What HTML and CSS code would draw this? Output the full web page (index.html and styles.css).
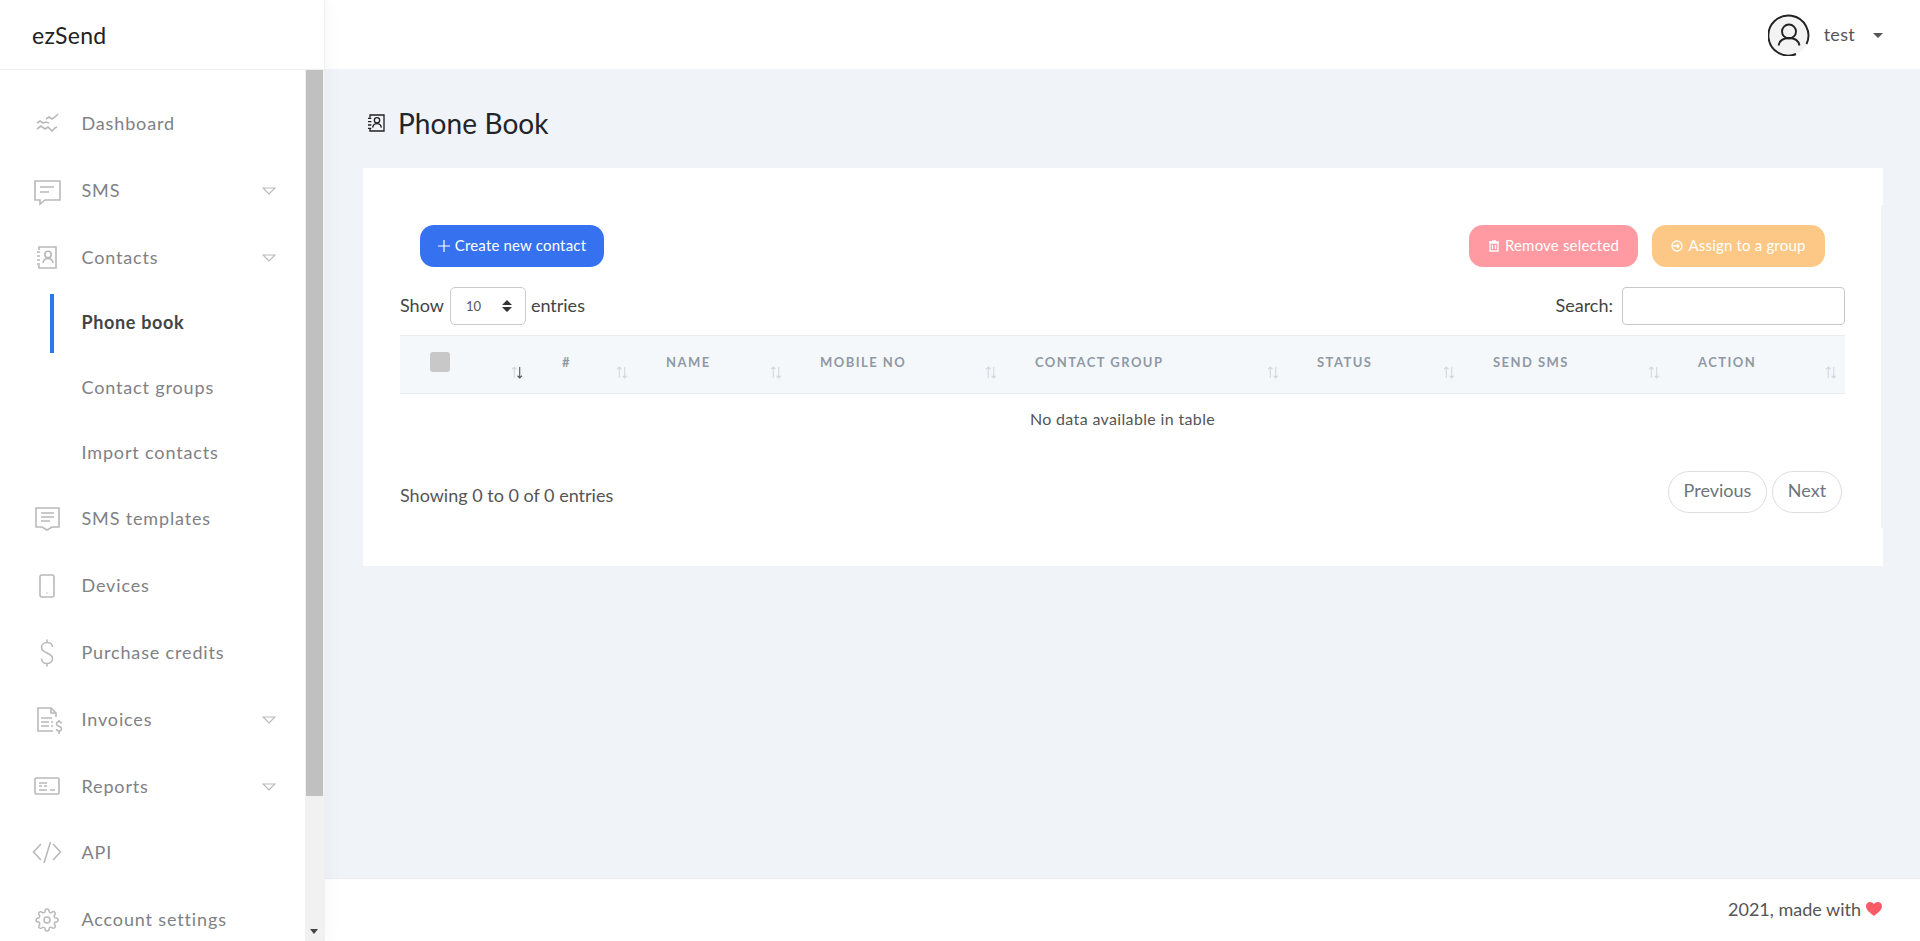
FILE: index.html
```html
<!DOCTYPE html>
<html lang="en">
<head>
<meta charset="utf-8">
<title>ezSend - Phone Book</title>
<link rel="stylesheet" href="styles.css">
</head>
<body>
<div class="app">
  <aside class="sidebar">
    <div class="brand">ezSend</div>
    <div class="side-body">
      <nav class="nav">
        <a class="item"><svg class="ico" viewBox="0 0 30 30"><path d="M14 10l3-2 3 2 3-2 3-3M5 14l3-2 3 2 3-1 3 1M5 20l4-3 4 3 3-2 4 4 3-3 2-1"/></svg><span>Dashboard</span></a>
        <a class="item"><svg class="ico" viewBox="0 0 30 30"><path d="M3 5h25v19H13l-5 4v-4H3z"/><path d="M8 11h14M8 16h9"/></svg><span>SMS</span><svg class="chev" viewBox="0 0 14 8"><path d="M1 1h12L7 7z"/></svg></a>
        <a class="item"><svg class="ico" viewBox="0 0 30 30"><path d="M7 7V4h17v21H7v-3"/><path d="M5 9h3M5 13h3M5 17h3M5 21h3"/><circle cx="16" cy="11.500" r="3.200"/><path d="M11 20c.400-3 2-4.500 5-4.500s4.600 1.500 5 4.500"/></svg><span>Contacts</span><svg class="chev" viewBox="0 0 14 8"><path d="M1 1h12L7 7z"/></svg></a>
        <div class="sub">
          <a class="sub-item active">Phone book</a>
          <a class="sub-item">Contact groups</a>
          <a class="sub-item">Import contacts</a>
        </div>
        <a class="item"><svg class="ico" viewBox="0 0 30 30"><path d="M4 4h23v19h-7l-5 3-5-3H4z"/><path d="M9 9h13M9 13h13M9 17h9"/></svg><span>SMS templates</span></a>
        <a class="item"><svg class="ico" viewBox="0 0 30 30"><rect x="8" y="4" width="14" height="22" rx="2"/><path d="M14.500 22h1"/></svg><span>Devices</span></a>
        <a class="item"><svg class="ico" viewBox="0 0 30 30"><path d="M20.500 9c0-3-2.500-4.500-5.500-4.500S9.500 6.500 9.500 9.500c0 3 2.500 4.200 5.500 5.500s5.500 2.500 5.500 5.500-2.500 5-5.500 5-5.500-2-5.500-5M15 1.500v3M15 25.500v3"/></svg><span>Purchase credits</span></a>
        <a class="item"><svg class="ico" viewBox="0 0 30 30"><path d="M24 12V8l-5-5H6v23h15"/><path d="M19 3v5h5M9 13h11M9 17h8M9 21h8M19 17h2M19 21h2"/><path d="M29.500 18.500c0-1-1-1.800-2.500-1.800s-2.500.8-2.500 2.200 1.400 2 2.500 2.400 2.500 1 2.500 2.400-1 2.300-2.500 2.300-2.500-.9-2.500-2M27 15v1.700M27 26.500V29"/></svg><span>Invoices</span><svg class="chev" viewBox="0 0 14 8"><path d="M1 1h12L7 7z"/></svg></a>
        <a class="item"><svg class="ico" viewBox="0 0 30 30"><rect x="3" y="6" width="24" height="16" rx="1"/><path d="M7 11h8M7 14h3M12 14h3M7 18h8M18 18h5"/></svg><span>Reports</span><svg class="chev" viewBox="0 0 14 8"><path d="M1 1h12L7 7z"/></svg></a>
        <a class="item"><svg class="ico" viewBox="0 0 30 30"><path d="M9 6l-7.500 8L9 22M21 6l7.500 8L21 22M18.500 4L12 25"/></svg><span>API</span></a>
        <a class="item"><svg class="ico gear" viewBox="0 0 24 24"><circle cx="12" cy="12" r="3"/><path d="M19.400 15a1.650 1.650 0 0 0 .330 1.820l.060.060a2 2 0 0 1 0 2.830 2 2 0 0 1-2.830 0l-.060-.060a1.650 1.650 0 0 0-1.820-.330 1.650 1.650 0 0 0-1 1.510V21a2 2 0 0 1-2 2 2 2 0 0 1-2-2v-.090A1.650 1.650 0 0 0 9 19.400a1.650 1.650 0 0 0-1.820.330l-.060.060a2 2 0 0 1-2.830 0 2 2 0 0 1 0-2.830l.060-.060a1.650 1.650 0 0 0 .330-1.820 1.650 1.650 0 0 0-1.510-1H3a2 2 0 0 1-2-2 2 2 0 0 1 2-2h.090A1.650 1.650 0 0 0 4.600 9a1.650 1.650 0 0 0-.330-1.820l-.060-.060a2 2 0 0 1 0-2.830 2 2 0 0 1 2.830 0l.060.060a1.650 1.650 0 0 0 1.820.330H9a1.650 1.650 0 0 0 1-1.510V3a2 2 0 0 1 2-2 2 2 0 0 1 2 2v.090a1.650 1.650 0 0 0 1 1.510 1.650 1.650 0 0 0 1.820-.330l.060-.060a2 2 0 0 1 2.830 0 2 2 0 0 1 0 2.830l-.060.060a1.650 1.650 0 0 0-.330 1.820V9a1.650 1.650 0 0 0 1.510 1H21a2 2 0 0 1 2 2 2 2 0 0 1-2 2h-.090a1.650 1.650 0 0 0-1.510 1z"/></svg><span>Account settings</span></a>
      </nav>
      <div class="scrollbar"><div class="thumb"></div><div class="arrow"></div></div>
    </div>
  </aside>
  <div class="main">
    <header class="top">
      <svg class="avatar" viewBox="0 0 42 42"><circle class="av-bg" cx="21" cy="21" r="20"/><path class="av-line" d="M38.500 30A20 20 0 1 0 28 40"/><circle class="av-line" cx="21" cy="17.500" r="7"/><path class="av-line" d="M10.500 31.500c1-5 4.500-7.500 10.500-7.500s9.500 2.500 10.500 7.500"/></svg>
      <span class="user">test</span>
      <span class="caret"></span>
    </header>
    <main class="content">
      <h1 class="title"><svg class="title-ico" viewBox="0 0 30 30"><path d="M6 7V3h21v24H6v-4"/><path d="M3 8h5M3 13h5M3 18h5M3 23h5"/><circle cx="16.500" cy="11" r="4"/><path d="M10 22c.500-4 3-6 6.500-6s6 2 6.500 6"/></svg>Phone Book</h1>
      <section class="card">
        <div class="actions">
          <button class="btn primary"><svg class="plus" viewBox="0 0 12 12"><path d="M6 0v12M0 6h12"/></svg><span class="btn-text">Create new contact</span></button>
          <div class="actions-right">
            <button class="btn danger"><svg class="mini" viewBox="0 0 12 12"><path d="M2 3h8v8H2zM1 2h10M4 1h4M4.500 5v4M7.500 5v4"/></svg><span class="btn-text">Remove selected</span></button>
            <button class="btn warning"><svg class="mini" viewBox="0 0 12 12"><circle cx="6" cy="6" r="5"/><path d="M2 6h6M6 4l2 2-2 2"/></svg><span class="btn-text">Assign to a group</span></button>
          </div>
        </div>
        <div class="controls">
          <label class="length"><span class="lbl">Show</span><span class="select">10<svg class="updown" viewBox="0 0 10 12"><path d="M5 0l5 5H0zM5 12l5-5H0z"/></svg></span><span class="lbl">entries</span></label>
          <label class="search"><span class="lbl">Search:</span><input class="search-input" type="text"></label>
        </div>
        <table class="table">
          <thead>
            <tr>
              <th class="c1"><span class="check"></span><svg class="sort first" viewBox="0 0 11 12"><path d="M3 11V1M1 3l2-2 2 2"/><path class="down" d="M8 1v10M6 9l2 2 2-2"/></svg></th>
              <th class="c2">#<svg class="sort" viewBox="0 0 11 12"><path d="M3 11V1M1 3l2-2 2 2M8 1v10M6 9l2 2 2-2"/></svg></th>
              <th class="c3">NAME<svg class="sort" viewBox="0 0 11 12"><path d="M3 11V1M1 3l2-2 2 2M8 1v10M6 9l2 2 2-2"/></svg></th>
              <th class="c4">MOBILE NO<svg class="sort" viewBox="0 0 11 12"><path d="M3 11V1M1 3l2-2 2 2M8 1v10M6 9l2 2 2-2"/></svg></th>
              <th class="c5">CONTACT GROUP<svg class="sort" viewBox="0 0 11 12"><path d="M3 11V1M1 3l2-2 2 2M8 1v10M6 9l2 2 2-2"/></svg></th>
              <th class="c6">STATUS<svg class="sort" viewBox="0 0 11 12"><path d="M3 11V1M1 3l2-2 2 2M8 1v10M6 9l2 2 2-2"/></svg></th>
              <th class="c7">SEND SMS<svg class="sort" viewBox="0 0 11 12"><path d="M3 11V1M1 3l2-2 2 2M8 1v10M6 9l2 2 2-2"/></svg></th>
              <th class="c8">ACTION<svg class="sort" viewBox="0 0 11 12"><path d="M3 11V1M1 3l2-2 2 2M8 1v10M6 9l2 2 2-2"/></svg></th>
            </tr>
          </thead>
          <tbody>
            <tr><td colspan="8" class="empty">No data available in table</td></tr>
          </tbody>
        </table>
        <div class="table-foot">
          <div class="info">Showing 0 to 0 of 0 entries</div>
          <div class="pager"><a class="page">Previous</a><a class="page">Next</a></div>
        </div>
      </section>
    </main>
    <footer class="foot">2021, made with <svg class="heart" viewBox="0 0 16 14"><path d="M8 14C3 10 0 7.500 0 4.200 0 1.800 1.800 0 4.200 0 5.700 0 7.100.7 8 2c.9-1.300 2.300-2 3.800-2C14.200 0 16 1.800 16 4.200 16 7.500 13 10 8 14z"/></svg></footer>
  </div>
</div>
</body>
</html>
```
FILE: styles.css
```css
* { box-sizing: border-box; }
html, body { margin: 0; height: 100%; overflow: hidden; }
body { font-family: "Lato", "Noto Sans", sans-serif; font-size: 18px; color: #444; background: #f0f3f8; }
.app { display: grid; grid-template-columns: 325px 1fr; height: 941px; }

.sidebar { display: flex; flex-direction: column; background: #fff; border-right: 1px solid #f0f0f3; box-shadow: 4px 0 14px rgba(0,0,0,.03); position: relative; z-index: 2; height: 941px; }
.brand { height: 70px; flex: none; padding-left: 32px; display: flex; align-items: center; font-size: 23px; color: #222; border-bottom: 1px solid #eceef1; letter-spacing: .3px; }
.side-body { flex: 1; display: flex; min-height: 0; }
.nav { width: 305px; flex: none; padding: 20.6px 29px 0 32px; overflow: hidden; }
.item { display: flex; align-items: center; height: 66.8px; color: #808184; letter-spacing: .85px; }
.item span { padding-bottom: 2px; }
.ico { width: 30px; height: 30px; flex: none; margin-right: 19.5px; fill: none; stroke: #b9b9b9; stroke-width: 1.6; }
.gear { stroke-width: 1.5; padding: 3px; }
.chev { width: 14px; height: 8px; margin-left: auto; fill: none; stroke: #b9b9b9; stroke-width: 1.2; }
.sub { margin-top: -1px; margin-bottom: 1px; }
.sub-item { display: block; height: 65px; line-height: 65px; padding-left: 49.5px; color: #808184; letter-spacing: .85px; position: relative; }
.sub-item.active { color: #444; font-weight: 700; letter-spacing: .65px; }
.sub-item.active::before { content: ""; position: absolute; left: 18px; top: 4px; bottom: 2px; width: 4px; background: #2878ee; }
.scrollbar { width: 19px; flex: none; background: #f1f1f1; position: relative; }
.thumb { width: 17px; margin-left: 1px; height: 726px; background: #c0c0c0; }
.arrow { position: absolute; left: 5px; bottom: 7px; width: 0; height: 0; border-left: 4px solid transparent; border-right: 4px solid transparent; border-top: 5px solid #444; }

.main { display: flex; flex-direction: column; min-width: 0; }
.top { height: 69px; flex: none; background: #fff; display: flex; align-items: center; justify-content: flex-end; padding-right: 37px; }
.avatar { width: 42px; height: 42px; margin-right: 14px; }
.av-bg { fill: #f3f3f3; }
.av-line { fill: none; stroke: #222; stroke-width: 1.900; }
.user { color: #555; letter-spacing: .3px; margin-right: 18px; padding-bottom: 2px; }
.caret { width: 0; height: 0; border-left: 5px solid transparent; border-right: 5px solid transparent; border-top: 5px solid #555; margin-top: 2px; }

.content { flex: 1; padding: 0 37px 0 38px; min-height: 0; }
.title { margin: 0; height: 99px; display: flex; align-items: center; padding-top: 8px; font-size: 28px; font-weight: 400; color: #212529; letter-spacing: .1px; }
.title-ico { width: 20px; height: 22px; margin: 0 12px 0 3px; fill: none; stroke: #222; stroke-width: 2; }

.card { background: #fff; height: 398px; padding: 57px 38px 0 37px; position: relative; }
.card::after { content: ""; position: absolute; right: 0; top: 37px; bottom: 38px; width: 2px; background: #f3f3f6; }
.actions { display: flex; justify-content: space-between; padding: 0 20px; }
.actions-right { display: flex; gap: 14px; }
.btn { height: 42px; border: 0; border-radius: 14px; color: #fff; font: inherit; font-size: 15px; display: flex; align-items: center; justify-content: center; padding: 0; letter-spacing: .18px; }
.btn-text { padding-bottom: 2px; }
.primary { width: 184px; background: #3672f0; }
.danger { width: 169px; background: #ff9aa2; }
.warning { width: 173px; background: #fdc886; }
.plus { width: 12px; height: 12px; margin-right: 5px; fill: none; stroke: #fff; stroke-width: 1.200; }
.mini { width: 12px; height: 12px; margin-right: 5px; fill: none; stroke: #fff; stroke-width: 1.300; }
.controls { display: flex; justify-content: space-between; margin-top: 20px; height: 38px; align-items: center; }
.length, .search { display: flex; align-items: center; color: #444; }
.search { gap: 9px; }
.lbl { padding-bottom: 3px; }
.select { width: 76px; height: 38px; margin: 0 5px 0 6px; border: 1px solid #ccc; border-radius: 5px; font-size: 13px; color: #555; display: flex; align-items: center; justify-content: space-between; padding: 0 13px 0 15px; }
.updown { width: 10px; height: 12px; fill: #333; }
.search-input { width: 223px; height: 38px; border: 1px solid #c8c8c8; border-radius: 4px; background: #fff; outline: 0; }
.table { width: 1445px; margin-top: 10px; border-collapse: collapse; table-layout: fixed; }
.table th { position: relative; height: 58px; background: #f5f8fb; border-top: 1px solid #e9ecef; border-bottom: 1px solid #e9ecef; text-align: left; padding: 0 0 5px 30px; font-size: 13px; font-weight: 700; color: #8f99a6; letter-spacing: 1.450px; }
.c1 { width: 132px; } .c2 { width: 104px; } .c3 { width: 154px; } .c4 { width: 215px; }
.c5 { width: 282px; } .c6 { width: 176px; } .c7 { width: 205px; } .c8 { width: 177px; }
.check { display: block; width: 20px; height: 20px; background: #c8c8c8; border-radius: 3px; }
.sort { position: absolute; right: 8px; top: 30px; width: 12px; height: 13px; fill: none; stroke: #d3d8de; stroke-width: 1; }
.sort.first { right: 9px; }
.sort .down { stroke: #555; }
.empty { text-align: center; height: 52px; padding-bottom: 4px; font-size: 16px; color: #555; letter-spacing: .35px; }
.table-foot { display: flex; justify-content: space-between; align-items: center; margin-top: 25px; padding-right: 3px; }
.info { color: #555; padding-top: 6px; }
.pager { display: flex; gap: 5px; }
.page { height: 42px; border: 1px solid #dedede; border-radius: 21px; display: flex; align-items: center; justify-content: center; color: #6c757d; padding-bottom: 3px; }
.page:first-child { width: 99px; }
.page:last-child { width: 70px; }

.foot { height: 63px; flex: none; background: #fff; border-top: 1px solid #e9ebf0; display: flex; align-items: center; justify-content: flex-end; gap: 5px; padding: 0 38px 2px 0; color: #555; }
.heart { width: 16px; height: 14px; fill: #fb5b66; }
```
